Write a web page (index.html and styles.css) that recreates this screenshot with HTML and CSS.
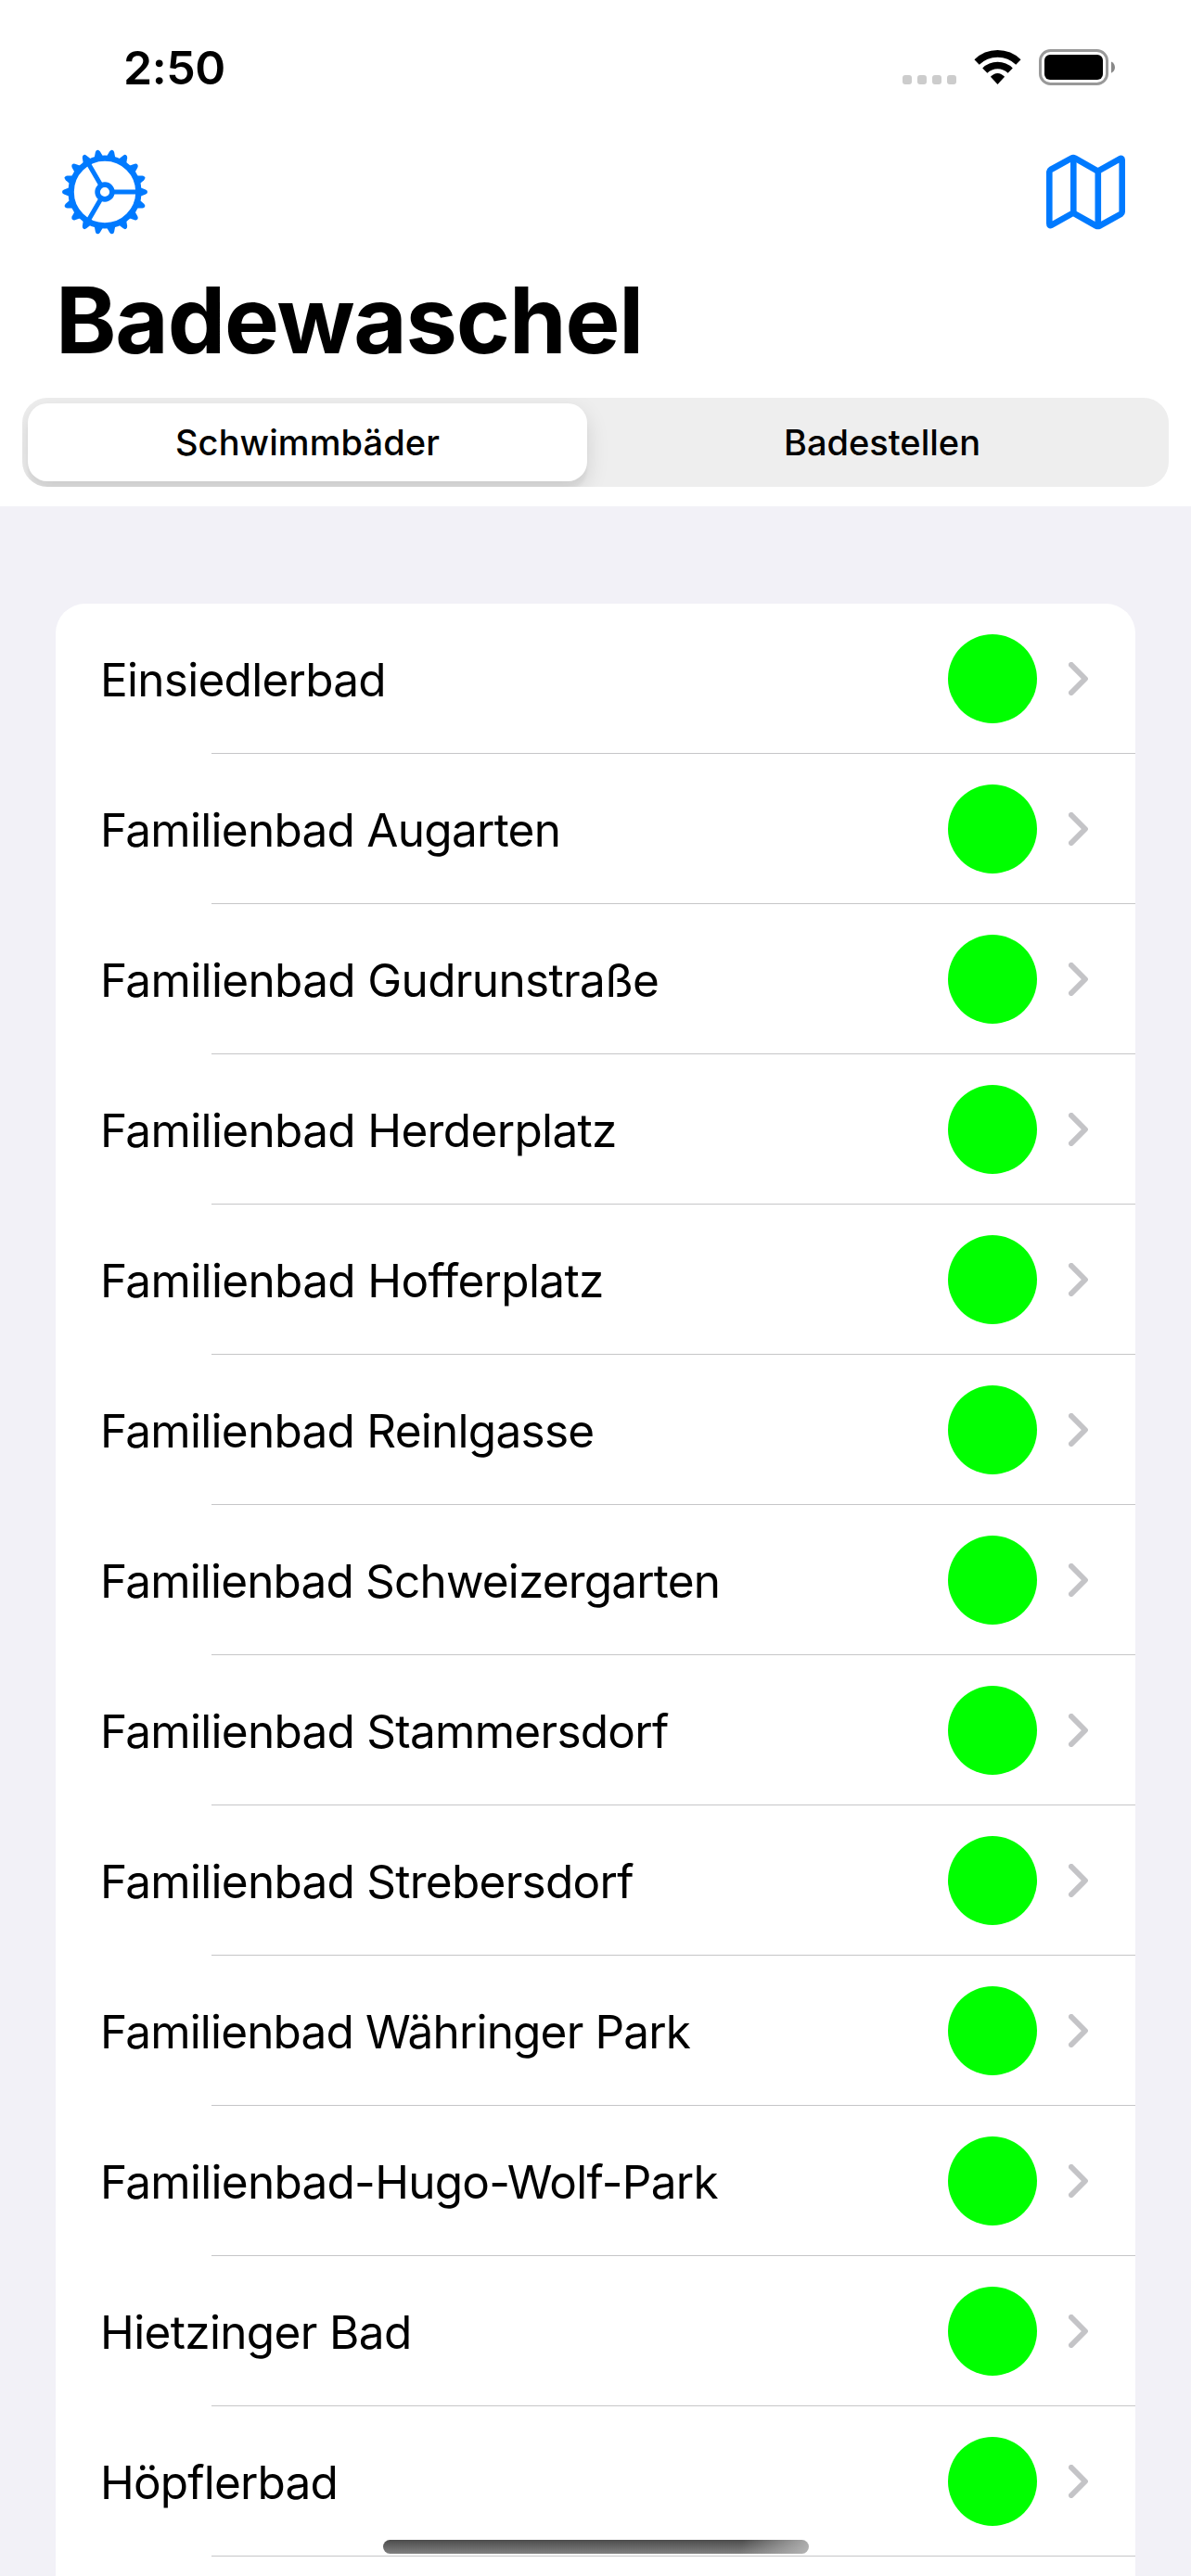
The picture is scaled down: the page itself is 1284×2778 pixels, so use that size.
FILE: index.html
```html
<!DOCTYPE html>
<html lang="de">
<head>
<meta charset="utf-8">
<title>Badewaschel</title>
<link rel="stylesheet" href="styles.css">
</head>
<body>
<svg class="symbols" aria-hidden="true">
  <symbol id="chevron" viewBox="0 0 21 36"><path d="M3 3 17.9 18 3 33" fill="none" stroke="#c4c4c7" stroke-width="6" stroke-linecap="round" stroke-linejoin="round"/></symbol>
</svg>
<div class="screen">
  <header class="header">
    <div class="status">
      <span class="time">2:50</span>
      <svg class="status-icons" width="230" height="54" viewBox="0 0 230 54">
        <g fill="#ccc">
          <rect x="0" y="35" width="10" height="10" rx="3"/>
          <rect x="16" y="35" width="10" height="10" rx="3"/>
          <rect x="32" y="35" width="10" height="10" rx="3"/>
          <rect x="48" y="35" width="10" height="10" rx="3"/>
        </g>
        <g transform="translate(102.5 44)" fill="none" stroke="#000">
          <path d="M-22.4 -23A32.1 32.1 0 0 1 22.4 -23" stroke-width="7.6"/>
          <path d="M-13.7 -13.9A19.5 19.5 0 0 1 13.7 -13.9" stroke-width="7.4"/>
          <path d="M-7.6 -7.2Q-4 -11 0 -11Q4 -11 7.6 -7.2L0 1Z" fill="#000" stroke="none"/>
        </g>
        <rect x="148.500" y="8.500" width="72" height="36" rx="11" fill="none" stroke="#999" stroke-width="3"/>
        <rect x="153" y="13" width="63" height="27" rx="6" fill="#000"/>
        <path d="M225 20.500C230.300 22.500 230.300 30.700 225 32.700Z" fill="#888"/>
      </svg>
    </div>
    <nav class="toolbar">
      <svg width="92" height="92" viewBox="-46 -46 92 92" fill="#007aff">
        <g>
          <path id="tooth" d="M37 -5.200 44 -2.500Q46 -1.600 46 0Q46 1.600 44 2.500L37 5.200Z"/>
          <use href="#tooth" transform="rotate(20)"/>
          <use href="#tooth" transform="rotate(40)"/>
          <use href="#tooth" transform="rotate(60)"/>
          <use href="#tooth" transform="rotate(80)"/>
          <use href="#tooth" transform="rotate(100)"/>
          <use href="#tooth" transform="rotate(120)"/>
          <use href="#tooth" transform="rotate(140)"/>
          <use href="#tooth" transform="rotate(160)"/>
          <use href="#tooth" transform="rotate(180)"/>
          <use href="#tooth" transform="rotate(200)"/>
          <use href="#tooth" transform="rotate(220)"/>
          <use href="#tooth" transform="rotate(240)"/>
          <use href="#tooth" transform="rotate(260)"/>
          <use href="#tooth" transform="rotate(280)"/>
          <use href="#tooth" transform="rotate(300)"/>
          <use href="#tooth" transform="rotate(320)"/>
          <use href="#tooth" transform="rotate(340)"/>
        </g>
        <g fill="none" stroke="#007aff">
          <circle r="36.400" stroke-width="6.400"/>
          <circle r="7.900" stroke-width="5.600"/>
          <path d="M10 0H35M-5 -8.660-17.500 -30.300M-5 8.660-17.500 30.300" stroke-width="5"/>
        </g>
      </svg>
      <svg width="85" height="82" viewBox="0 -0.600 85 82" fill="none" stroke="#007aff" stroke-width="6.600" stroke-linejoin="round">
        <path d="M3.300 18.500Q3.300 17.300 4.700 16.400L27.200 4Q29 3 31 4L55.600 18 79.200 4.700Q81.700 3.300 81.700 6V62Q81.700 63.400 80.300 64.300L57.500 76.900Q55.600 77.900 53.700 76.900L29 63 5.400 76.200Q3.300 77.300 3.300 74.500Z"/>
        <path d="M29.300 4V63.500M55.800 18V77"/>
      </svg>
    </nav>
    <h1 class="title">Badewaschel</h1>
    <div class="segments">
      <div class="segment active">Schwimmbäder</div>
      <div class="segment">Badestellen</div>
    </div>
  </header>
  <main class="content">
    <ul class="list">
      <li class="row"><span class="name">Einsiedlerbad</span><i class="dot"></i><svg class="chevron"><use href="#chevron"/></svg></li>
      <li class="row"><span class="name">Familienbad Augarten</span><i class="dot"></i><svg class="chevron"><use href="#chevron"/></svg></li>
      <li class="row"><span class="name loose">Familienbad Gudrunstraße</span><i class="dot"></i><svg class="chevron"><use href="#chevron"/></svg></li>
      <li class="row"><span class="name loose">Familienbad Herderplatz</span><i class="dot"></i><svg class="chevron"><use href="#chevron"/></svg></li>
      <li class="row"><span class="name loose">Familienbad Hofferplatz</span><i class="dot"></i><svg class="chevron"><use href="#chevron"/></svg></li>
      <li class="row"><span class="name">Familienbad Reinlgasse</span><i class="dot"></i><svg class="chevron"><use href="#chevron"/></svg></li>
      <li class="row"><span class="name tight">Familienbad Schweizergarten</span><i class="dot"></i><svg class="chevron"><use href="#chevron"/></svg></li>
      <li class="row"><span class="name">Familienbad Stammersdorf</span><i class="dot"></i><svg class="chevron"><use href="#chevron"/></svg></li>
      <li class="row"><span class="name">Familienbad Strebersdorf</span><i class="dot"></i><svg class="chevron"><use href="#chevron"/></svg></li>
      <li class="row"><span class="name tight">Familienbad Währinger Park</span><i class="dot"></i><svg class="chevron"><use href="#chevron"/></svg></li>
      <li class="row"><span class="name">Familienbad-Hugo-Wolf-Park</span><i class="dot"></i><svg class="chevron"><use href="#chevron"/></svg></li>
      <li class="row"><span class="name loose">Hietzinger Bad</span><i class="dot"></i><svg class="chevron"><use href="#chevron"/></svg></li>
      <li class="row"><span class="name tight">Höpflerbad</span><i class="dot"></i><svg class="chevron"><use href="#chevron"/></svg></li>
    </ul>
  </main>
  <div class="home-indicator"></div>
</div>
</body>
</html>
```
FILE: styles.css
```css
* { box-sizing: border-box; }

body {
  margin: 0;
  font-family: Inter, "Liberation Sans", sans-serif;
  color: #000;
}

.symbols { display: none; }

.screen {
  position: relative;
  display: flex;
  flex-direction: column;
  width: 1284px;
  height: 2778px;
  overflow: hidden;
  background: #f2f1f7;
}

.header {
  flex: none;
  padding-bottom: 21px;
  background: #fff;
}

.status {
  display: flex;
  justify-content: space-between;
  height: 142px;
  padding: 46px 81px 0 133px;
}

.time {
  font-size: 50px;
  font-weight: 600;
  line-height: 54px;
  letter-spacing: -0.4px;
}

.toolbar {
  display: flex;
  align-items: center;
  justify-content: space-between;
  height: 130px;
  padding: 0 71px 0 67px;
}

.title {
  margin: 0;
  padding-left: 60px;
  font-size: 99px;
  font-weight: 700;
  line-height: 146px;
  letter-spacing: -1.15px;
}

.segments {
  display: flex;
  gap: 9px;
  height: 96px;
  margin: 11px 24px 0;
  padding: 6px 0 6px 6px;
  border-radius: 27px;
  background: #eee;
  overflow: hidden;
}

.segment {
  flex: none;
  width: 618px;
  font-size: 38px;
  font-weight: 500;
  line-height: 84px;
  text-align: center;
}

.segment.active {
  width: 603px;
  border-radius: 21px;
  background: #fff;
  box-shadow: 0 9px 24px rgba(0, 0, 0, 0.12), 0 9px 3px rgba(0, 0, 0, 0.04);
  font-weight: 550;
  letter-spacing: 0.1px;
}

.content {
  flex: none;
  padding: 105px 60px 0;
}

.list {
  margin: 0;
  padding: 0 0 30px;
  border-radius: 32px 32px 0 0;
  background: #fff;
  list-style: none;
}

.row {
  display: flex;
  align-items: center;
  height: 162px;
  padding: 0 51px 1px 48px;
  background: linear-gradient(#c6c6c8, #c6c6c8) 168px 100% / 100% 1px no-repeat;
}

.name {
  flex: 1;
  padding-top: 2px;
  font-size: 49.5px;
  line-height: 60px;
  letter-spacing: -0.73px;
}

.name.loose { letter-spacing: -0.65px; }
.name.tight { letter-spacing: -0.83px; }

.dot {
  width: 96px;
  height: 96px;
  margin-right: 34px;
  border-radius: 50%;
  background: #0f0;
}

.chevron {
  width: 21px;
  height: 36px;
}

.home-indicator {
  position: absolute;
  left: 413px;
  bottom: 24px;
  width: 459px;
  height: 15px;
  border-radius: 7.5px;
  background:
    linear-gradient(100deg, transparent 84%, rgba(190, 190, 190, 0.85) 100%),
    linear-gradient(#4c4c4c, #808080);
}
```
